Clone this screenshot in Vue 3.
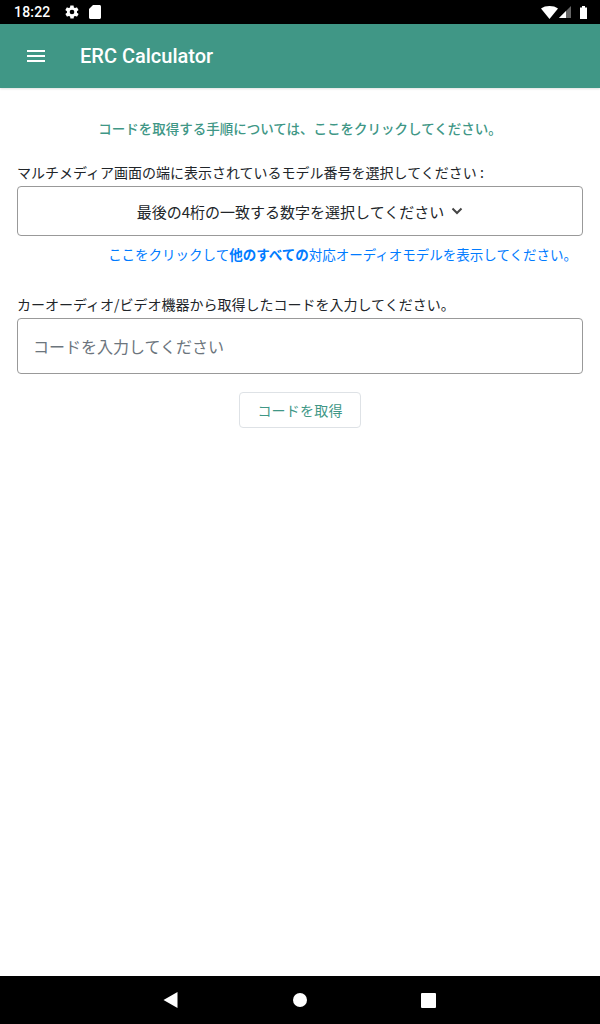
<template>
  <div class="screen">
    <div class="status-bar">
      <span class="clock">18:22</span>
      <svg class="st-gear" width="16" height="16" viewBox="0 0 24 24"><path fill="#fff" d="M19.4 13c.1-.3.1-.7.1-1s0-.7-.1-1l2.1-1.600c.2-.2.2-.4.1-.6l-2-3.500c-.1-.2-.4-.3-.6-.2l-2.500 1c-.5-.4-1.100-.7-1.700-1l-.4-2.600c0-.3-.2-.4-.5-.4h-4c-.3 0-.5.2-.5.4l-.4 2.600c-.6.3-1.200.6-1.700 1l-2.500-1c-.2-.1-.5 0-.6.2l-2 3.500c-.1.2-.1.5.1.600L4.500 11c-.1.300-.1.700-.1 1s0 .7.1 1l-2.100 1.600c-.2.2-.2.4-.1.6l2 3.500c.1.2.4.3.6.2l2.500-1c.5.4 1.100.7 1.700 1l.4 2.600c0 .3.2.4.5.4h4c.3 0 .5-.2.5-.4l.4-2.600c.6-.3 1.200-.6 1.700-1l2.500 1c.2.1.5 0 .6-.2l2-3.500c.1-.2.1-.5-.1-.6L19.400 13zM12 15.500a3.500 3.500 0 1 1 0-7 3.500 3.500 0 0 1 0 7z"/></svg>
      <svg class="st-sd" width="12" height="14" viewBox="0 0 12 14"><path fill="#fff" d="M4 0h6.500c.8 0 1.500.7 1.500 1.500v11c0 .8-.7 1.500-1.500 1.500h-9C.700 14 0 13.300 0 12.500V4z"/></svg>
      <span class="st-space"></span>
      <svg width="17" height="13" viewBox="0 0 17 13"><path fill="#fff" d="M0 2.500C2.300.8 5.200 0 8.500 0S14.700.8 17 2.500L8.500 13z"/></svg>
      <svg class="st-signal" width="12" height="12" viewBox="0 0 12 12"><path fill="#666" d="M12 0v12H0z"/><path fill="#fff" d="M7 5v7H0z"/></svg>
      <svg class="st-batt" width="7" height="13" viewBox="0 0 7 13"><path fill="#fff" d="M2 0h3v1.500h2V13H0V1.500h2z"/></svg>
    </div>

    <header class="app-bar">
      <div class="burger"><i></i><i></i><i></i></div>
      <h1 class="title">ERC Calculator</h1>
    </header>

    <main class="content">
      <p class="help-link">コードを取得する手順については、ここをクリックしてください。</p>

      <label class="label first">マルチメディア画面の端に表示されているモデル番号を選択してください :</label>
      <div class="select">
        <span>最後の4桁の一致する数字を選択してください</span>
        <svg width="12" height="8" viewBox="0 0 12 8"><path fill="none" stroke="#444" stroke-width="2" d="M1.500 1.500 6 6l4.500-4.500"/></svg>
      </div>
      <p class="all-models">ここをクリックして<b>他のすべての</b>対応オーディオモデルを表示してください。</p>

      <label class="label second">カーオーディオ/ビデオ機器から取得したコードを入力してください。</label>
      <input class="code-input" type="text" placeholder="コードを入力してください" />

      <div class="actions">
        <button class="submit" type="button">コードを取得</button>
      </div>
    </main>

    <nav class="nav-bar">
      <svg width="16" height="16" viewBox="0 0 16 16"><path fill="#fff" d="M14.500 0v16L.500 8z"/></svg>
      <span class="nav-circle"></span>
      <span class="nav-square"></span>
    </nav>
  </div>
</template>

<script setup>
</script>

<style>
html, body {
  margin: 0;
  background: #fff;
}
</style>

<style scoped>
.screen {
  width: 600px;
  height: 1024px;
  display: flex;
  flex-direction: column;
  font-family: "Noto Sans CJK JP", "Noto Sans", sans-serif;
  background: #fff;
  color: #212529;
}

.status-bar {
  height: 24px;
  background: #000;
  display: flex;
  align-items: center;
  padding: 0 14px;
  color: #fff;
  flex: none;
}

.clock {
  font-family: Roboto, sans-serif;
  font-size: 14px;
  font-weight: 500;
  letter-spacing: .2px;
}

.st-gear {
  margin-left: 13px;
}

.st-sd {
  margin-left: 9px;
}

.st-space {
  flex: 1;
}

.st-signal {
  margin-left: 1px;
  margin-right: 9px;
}

.st-batt {
  margin-right: -1px;
}

.app-bar {
  height: 64px;
  background: #409786;
  display: flex;
  align-items: center;
  padding-left: 27px;
  flex: none;
  box-shadow: 0 1px 2px rgba(0, 0, 0, .12);
}

.burger {
  width: 18px;
  display: flex;
  flex-direction: column;
  gap: 3px;
}

.burger i {
  display: block;
  height: 2px;
  background: #fff;
}

.title {
  margin: 0 0 0 35px;
  font-family: Roboto, sans-serif;
  font-size: 20px;
  font-weight: 500;
  color: #fff;
}

.content {
  flex: 1;
  padding: 0 17px;
}

.help-link {
  margin: 30px 0 0;
  text-align: center;
  font-size: 13.5px;
  line-height: 20px;
  font-weight: 500;
  color: #409786;
}

.label {
  display: block;
  font-size: 14px;
  line-height: 20px;
  color: #212529;
}

.label.first {
  margin-top: 24px;
}

.label.second {
  margin-top: 30px;
}

.select {
  height: 50px;
  box-sizing: border-box;
  margin-top: 4px;
  border: 1px solid #999;
  border-radius: 4px;
  display: flex;
  align-items: center;
  justify-content: center;
  gap: 7px;
  font-size: 15px;
  color: #212529;
}

.all-models {
  margin: 8px 6px 0 0;
  text-align: right;
  font-size: 13.500px;
  line-height: 20px;
  color: #007bff;
}

.code-input {
  display: block;
  width: 100%;
  height: 56px;
  box-sizing: border-box;
  margin-top: 4px;
  padding: 0 15px;
  border: 1px solid #999;
  border-radius: 4px;
  outline: none;
  font-family: inherit;
  font-size: 16px;
}

.code-input::placeholder {
  color: #6c757d;
  opacity: 1;
}

.actions {
  display: flex;
  justify-content: center;
  margin-top: 18px;
}

.submit {
  width: 122px;
  height: 36px;
  box-sizing: border-box;
  padding: 0;
  background: #fff;
  border: 1px solid #dee2e6;
  border-radius: 4px;
  font-family: inherit;
  font-size: 14px;
  letter-spacing: .2px;
  color: #409786;
}

.nav-bar {
  height: 48px;
  background: #000;
  flex: none;
  display: grid;
  grid-template-columns: 16px 14px 16px;
  justify-content: center;
  column-gap: 114px;
  align-items: center;
}

.nav-circle {
  width: 14px;
  height: 14px;
  border-radius: 50%;
  background: #fff;
}

.nav-square {
  width: 15px;
  height: 15px;
  border-radius: 1px;
  background: #fff;
}
</style>
